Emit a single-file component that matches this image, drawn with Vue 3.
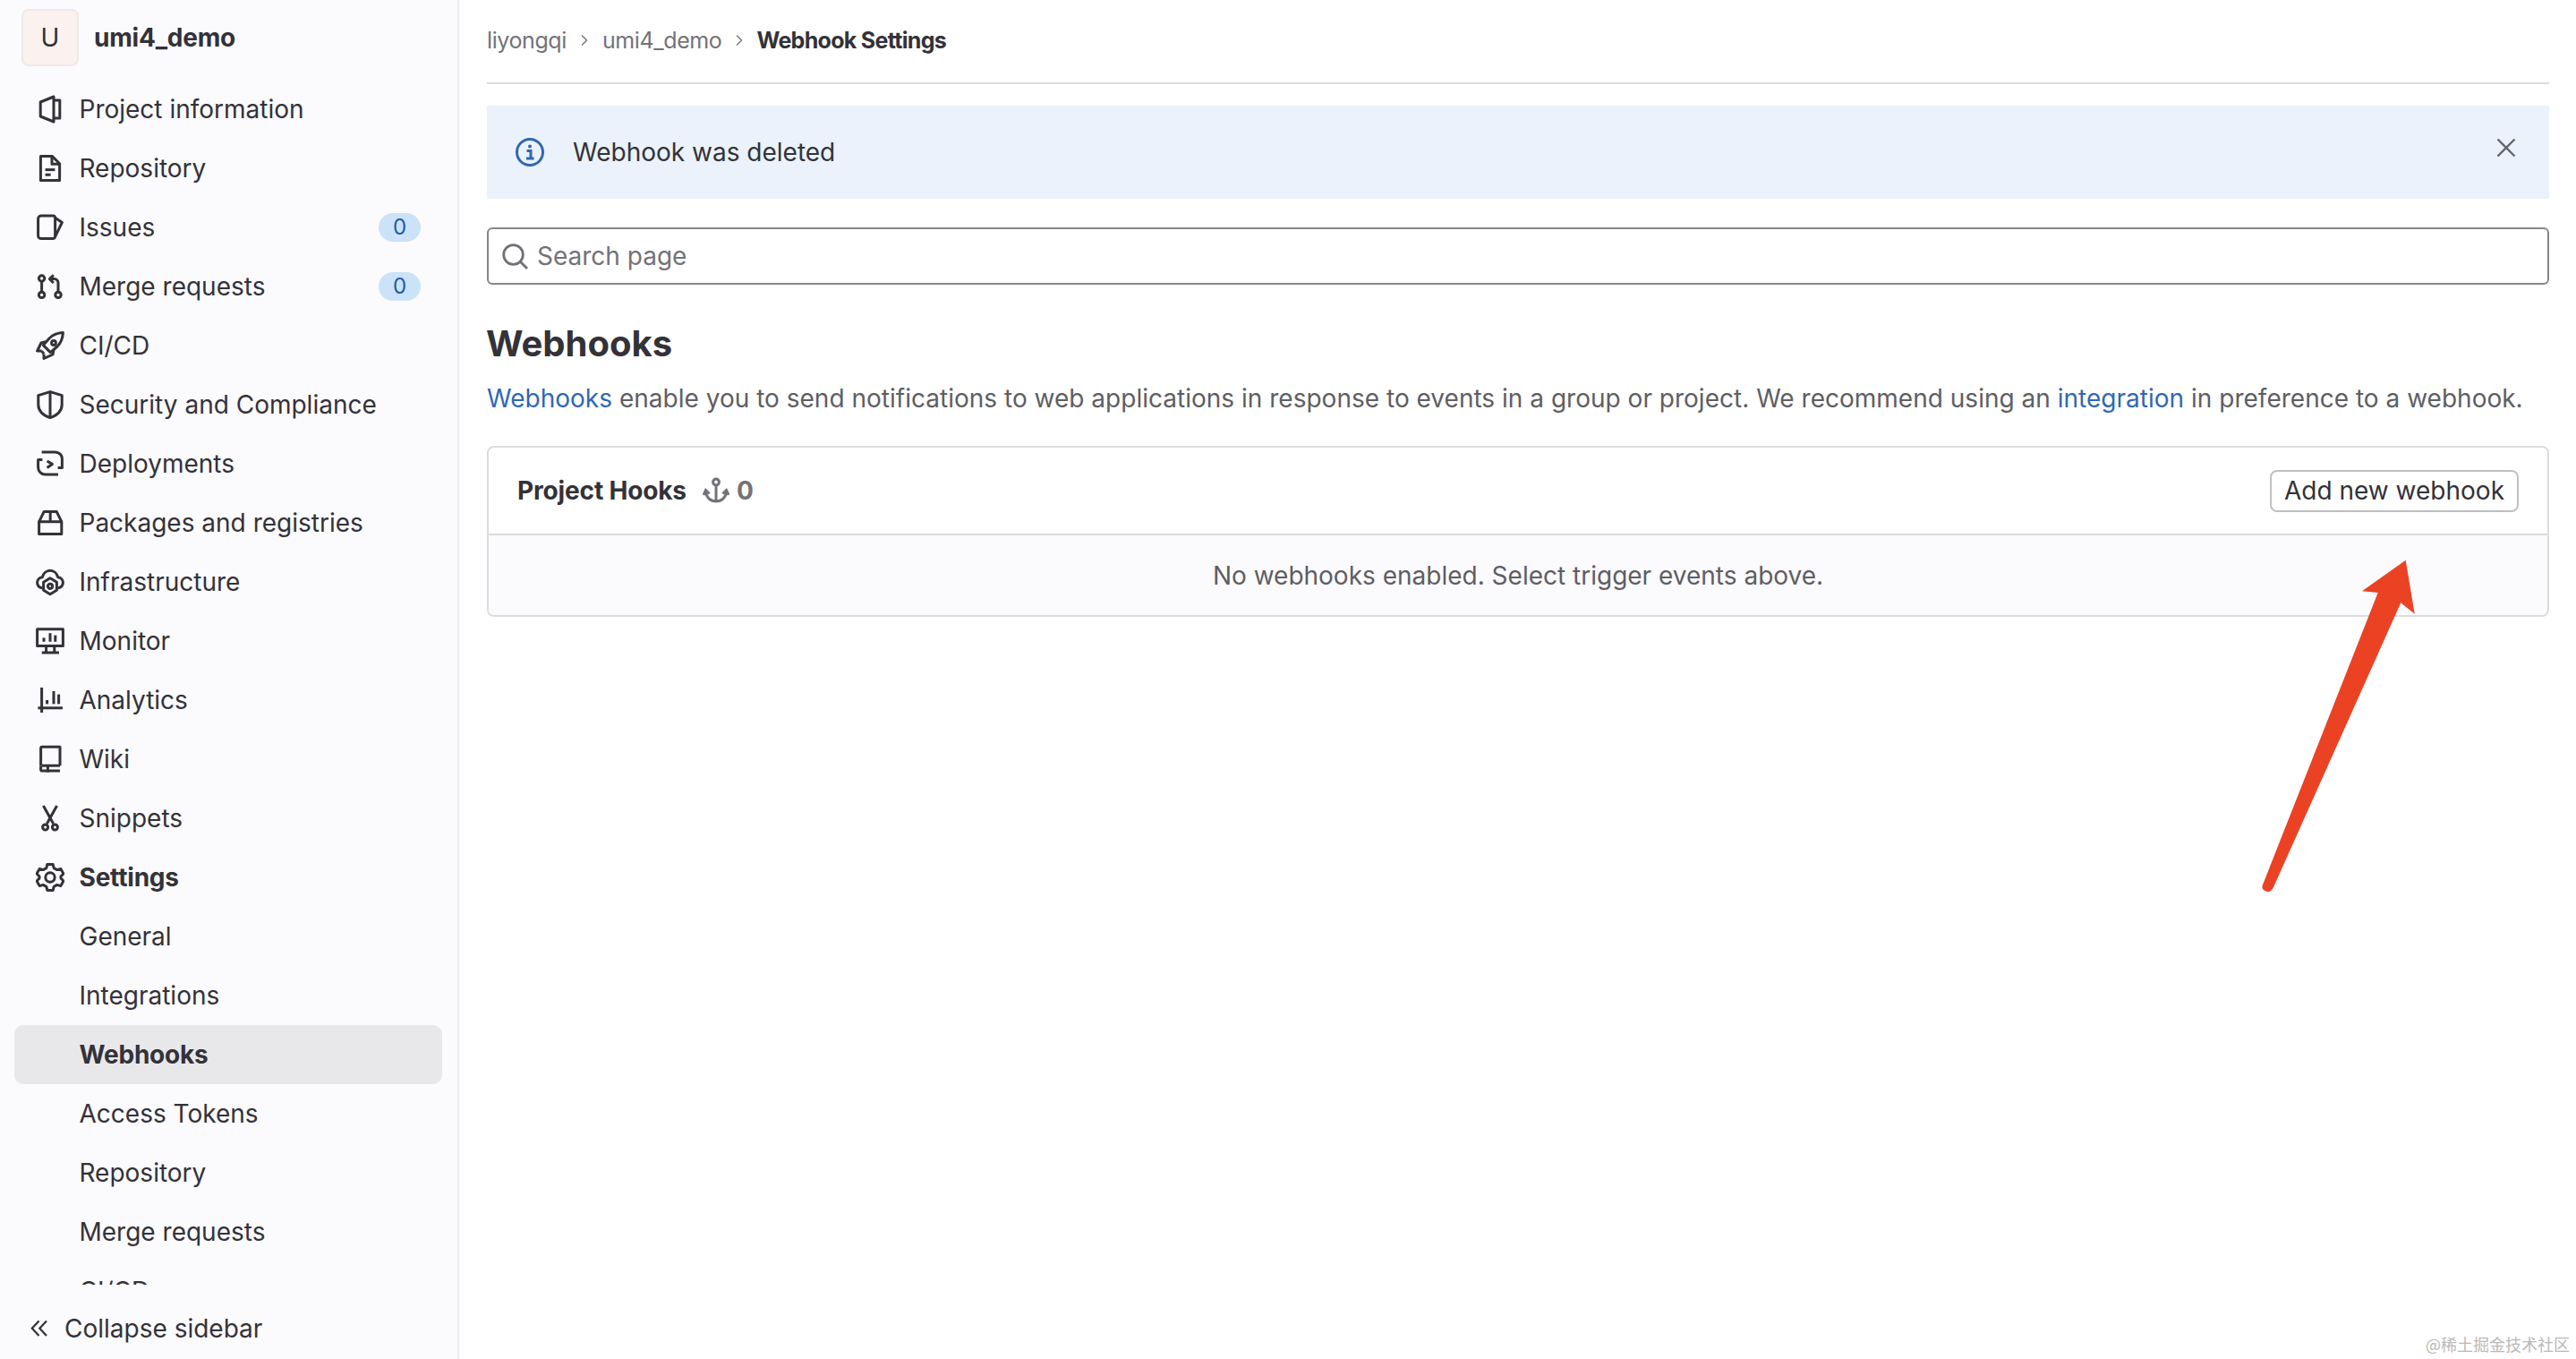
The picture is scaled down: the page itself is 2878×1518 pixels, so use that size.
<script setup>
const items = [
  { label: 'Project information', icon: ['M2.6 4 10 1v14l-7.4-3z', 'M10 3h3.4v10H10'] },
  { label: 'Repository', icon: ['M2.7 1.200h6.400l4.200 4.200v9.400H2.700z', 'M9 1.200v4.400h4.300', 'M5.300 8.800h5.400', 'M5.300 11.600h3'] },
  { label: 'Issues', icon: ['M3 1.500H9.600A1.200 1.200 0 0 1 10.800 2.700V13.100A1.200 1.200 0 0 1 9.600 14.300H3A1.700 1.700 0 0 1 1.300 12.600V3.200A1.700 1.700 0 0 1 3 1.500z', 'M10.800 2.600 14.700 5.200 10.800 13.200'], badge: '0' },
  { label: 'Merge requests', icon: ['M3.300 5.200V11', 'M4.900 3.500a1.600 1.600 0 1 1-3.200 0 1.600 1.600 0 0 1 3.200 0z', 'M4.900 12.700a1.600 1.600 0 1 1-3.200 0 1.600 1.600 0 0 1 3.200 0z', 'M14.100 12.700a1.600 1.600 0 1 1-3.200 0 1.600 1.600 0 0 1 3.200 0z', 'M12.500 11.100V6a2.200 2.200 0 0 0-2.200-2.200H8', 'M9.900 1.600 7.700 3.800l2.200 2.200'], badge: '0' },
  { label: 'CI/CD', icon: ['M15.200.800C12 1 9.500 2 7.500 4L4.200 7.800l4 4L12 8.500C14 6.500 15 4 15.200.800z', 'M5.500 5.800 3 6.500.800 11h2.500', 'M10 10.200 9.500 13 4.500 15.200v-2.500', 'M3.300 11l1.200 1.700', 'M11.200 6.500a1.200 1.200 0 1 1-2.400 0 1.200 1.200 0 0 1 2.400 0z'] },
  { label: 'Security and Compliance', icon: ['M8 .800 14.600 2.800V8c0 3.500-2.900 6-6.600 7.300C4.300 14 1.400 11.500 1.400 8V2.800z', 'M8 .800v14.500'] },
  { label: 'Deployments', icon: ['M3.300 1.500H10.800A3.900 3.700 0 0 1 14.700 5.200V10.200H12.300', 'M12.500 14H5.300A4 4 0 0 1 1.300 10.200V5.700H3.700', 'M6.300 6.500 9.200 8.200 6.300 10.200'] },
  { label: 'Packages and registries', icon: ['M1.800 7.400h12.600v6.800H1.800z', 'M1.800 7.400 4.600 1.700h7l2.800 5.700', 'M8.100 1.700v5.700'] },
  { label: 'Infrastructure', icon: ['M3.500 11.500C1.800 11 .800 9.800.800 8.400c0-1.600 1.200-2.800 2.800-3C4.200 3.200 6 1.600 8 1.600s3.800 1.600 4.400 3.800c1.600.2 2.800 1.400 2.800 3 0 1.400-1 2.600-2.700 3.100', 'M8 5.900l3.700 2.200v4.500L8 14.900l-3.700-2.300V8.100z', 'M9.300 10.400a1.300 1.300 0 1 1-2.600 0 1.300 1.300 0 0 1 2.600 0z'] },
  { label: 'Monitor', icon: ['M.800 1.400h14.400v9.400H.800z', 'M3.400 14.500H13', 'M5.800 10.800v3.700', 'M10.400 10.800v3.700', 'M4.500 6.200v2.200', 'M8 3.600v4.800', 'M10.900 4.800v3.600'] },
  { label: 'Analytics', icon: ['M1.200 12.400h13.800', 'M3.300 1v14', 'M6.300 8v2.200', 'M10 3v7.200', 'M12.800 4.800v5.400'] },
  { label: 'Wiki', icon: ['M2.800 11.800V1.900a.800.800 0 0 1 .800-.800H13.500v10.500', 'M2.800 11.800v1.900a.800.800 0 0 0 .800.800h9.900', 'M3.400 11.600H13.500', 'M6.700 11.600v3.700'] },
  { label: 'Snippets', icon: ['M4.200 1 9.800 11', 'M11.800 1 6.200 11', 'M6.800 13a1.500 1.500 0 1 1-3 0 1.500 1.500 0 0 1 3 0z', 'M12.200 13a1.500 1.500 0 1 1-3 0 1.500 1.500 0 0 1 3 0z'] },
  { label: 'Settings', bold: true, icon: ['M6.400.800H9.600l.5 2 1.800 1 2-.6 1.600 2.800-1.500 1.400v1.200l1.500 1.400-1.600 2.800-2-.6-1.800 1-.5 2H6.400l-.5-2-1.800-1-2 .6L.500 10 2 8.600V7.400L.500 6l1.600-2.800 2 .6 1.800-1z', 'M10.600 8a2.600 2.600 0 1 1-5.200 0 2.600 2.600 0 0 1 5.200 0z'] },
  { label: 'General' },
  { label: 'Integrations' },
  { label: 'Webhooks', active: true },
  { label: 'Access Tokens' },
  { label: 'Repository' },
  { label: 'Merge requests' },
  { label: 'CI/CD' },
]
</script>

<template>
  <div class="page">
    <aside class="sidebar">
      <div class="project">
        <span class="avatar">U</span>
        <span class="project-name">umi4_demo</span>
      </div>
      <nav class="nav">
        <a v-for="item in items" :key="item.label + (item.icon ? 'i' : 's')" class="nav-item" :class="{ active: item.active, bold: item.bold || item.active }">
          <span class="nav-icon">
            <svg v-if="item.icon" width="32" height="32" viewBox="0 0 16 16" fill="none" stroke="#333238" stroke-width="1.500" stroke-linejoin="round">
              <path v-for="d in item.icon" :key="d" :d="d" />
            </svg>
          </span>
          <span class="nav-label">{{ item.label }}</span>
          <span v-if="item.badge" class="badge">{{ item.badge }}</span>
        </a>
      </nav>
      <div class="collapse">
        <svg width="20" height="20" viewBox="0 0 20 20" fill="none" stroke="#333238" stroke-width="2.200">
          <path d="M9.500 1.500 1.800 9.800l7.700 8.300" />
          <path d="M18 1.500 10.300 9.800l7.700 8.300" />
        </svg>
        <span>Collapse sidebar</span>
      </div>
    </aside>

    <main class="main">
      <div class="crumbs">
        <span>liyongqi</span>
        <svg class="chev" width="10" height="14" viewBox="0 0 10 14" fill="none" stroke="#737278" stroke-width="1.400"><path d="m2 1.500 5.500 5.500L2 12.500" /></svg>
        <span>umi4_demo</span>
        <svg class="chev" width="10" height="14" viewBox="0 0 10 14" fill="none" stroke="#737278" stroke-width="1.400"><path d="m2 1.500 5.500 5.500L2 12.500" /></svg>
        <strong>Webhook Settings</strong>
      </div>

      <div class="alert">
        <svg width="32" height="32" viewBox="0 0 32 32" fill="none">
          <circle cx="16" cy="16" r="14.500" stroke="#2f68b4" stroke-width="3" />
          <circle cx="16" cy="9.500" r="2" fill="#2f68b4" />
          <path d="M12.500 14.500h4.500v8M12 23h8.500" stroke="#2f68b4" stroke-width="3" />
        </svg>
        <span class="alert-text">Webhook was deleted</span>
        <svg class="alert-close" width="22" height="22" viewBox="0 0 22 22" fill="none" stroke="#63666e" stroke-width="2.400"><path d="m1.500 1.500 19 19M20.500 1.500l-19 19" /></svg>
      </div>

      <div class="search">
        <svg width="29" height="29" viewBox="0 0 29 29" fill="none" stroke="#6f6f75" stroke-width="2.800">
          <circle cx="12.500" cy="12.500" r="10.800" />
          <path d="m20.500 20.500 7.500 7.500" />
        </svg>
        <span>Search page</span>
      </div>

      <h1 class="title">Webhooks</h1>
      <p class="desc"><a>Webhooks</a> enable you to send notifications to web applications in response to events in a group or project. We recommend using an <a>integration</a> in preference to a webhook.</p>

      <section class="card">
        <header class="card-head">
          <strong>Project Hooks</strong>
          <svg class="anchor" width="30" height="30" viewBox="0 0 30 30" fill="none" stroke="#737278" stroke-width="3">
            <circle cx="15" cy="5.500" r="3.400" />
            <path d="M15 9v17.500" />
            <path d="M3.500 16C4 23 9 27 15 27s11-4 11.500-11" />
            <path d="M1 20 3.500 14.500 7.500 18.500" />
            <path d="M22.500 18.500 26.500 14.500 29 20" />
          </svg>
          <span class="count">0</span>
          <button class="add">Add new webhook</button>
        </header>
        <div class="empty">No webhooks enabled. Select trigger events above.</div>
      </section>
    </main>

    <svg class="arrow" width="2878" height="1518" viewBox="0 0 2878 1518">
      <path d="M2687.700 625.700 2639 660.300 2656.700 662 2528.500 987Q2525 994 2533 996 2537 997 2540 991L2682.300 673.300 2697.700 685.700z" fill="#ec4224" />
    </svg>
    <span class="mark">@稀土掘金技术社区</span>
  </div>
</template>

<style>
html, body { margin: 0; overflow: hidden; background: #fff; }
</style>

<style scoped>
.page {
  position: relative;
  display: flex;
  width: 2878px;
  height: 1518px;
  overflow: hidden;
  font-family: Inter, "Noto Sans", sans-serif;
  color: #333238;
  background: #fff;
}
.sidebar {
  box-sizing: border-box;
  width: 513px;
  height: 1518px;
  flex: none;
  display: flex;
  flex-direction: column;
  background: #fbfafd;
  border-right: 2px solid #ececef;
}
.project {
  height: 84px;
  flex: none;
  box-sizing: border-box;
  padding: 10px 0 0 24px;
  display: flex;
  align-items: flex-start;
  gap: 17px;
}
.avatar {
  box-sizing: border-box;
  width: 64px;
  height: 64px;
  display: flex;
  align-items: center;
  justify-content: center;
  font-size: 28px;
  border-radius: 8px;
  background: #fbf1ee;
  border: 2px solid #efe9e8;
}
.project-name {
  line-height: 64px;
  font-size: 28px;
  font-weight: 700;
  letter-spacing: -0.2px;
}
.nav {
  height: 1351px;
  flex: none;
  padding: 5px 0 0;
  box-sizing: border-box;
  overflow: hidden;
}
.nav-item {
  height: 66px;
  margin: 0 17px 0 16px;
  padding: 0 24px;
  display: flex;
  align-items: center;
  border-radius: 10px;
  font-size: 28px;
}
.nav-item.bold { font-weight: 700; letter-spacing: -0.2px; }
.nav-item.active { background: #e8e8ea; }
.nav-icon {
  width: 48.500px;
  flex: none;
  display: flex;
  height: 32px;
}
.nav-label { flex: 1; }
.badge {
  width: 47px;
  height: 32px;
  border-radius: 16px;
  background: #cbe2f9;
  color: #1f5ca8;
  font-size: 24px;
  line-height: 32px;
  text-align: center;
}
.collapse {
  flex: 1;
  display: flex;
  align-items: center;
  padding: 14px 0 0 34px;
  gap: 18px;
  font-size: 28px;
}
.main {
  flex: 1;
  min-width: 0;
  padding: 0 30px 0 31px;
}
.crumbs {
  height: 90px;
  padding-bottom: 2px;
  display: flex;
  align-items: center;
  border-bottom: 2px solid #dcdcde;
  color: #737278;
  font-size: 25px;
  letter-spacing: -0.4px;
}
.crumbs strong { color: #333238; font-weight: 700; letter-spacing: -0.7px; margin-left: -1px; }
.chev { margin: 0 15px 0 15px; }
.alert {
  margin-top: 24px;
  height: 104px;
  display: flex;
  align-items: center;
  padding-left: 32px;
  background: #ebf2fb;
  font-size: 28px;
}
.alert-text { margin-left: 32px; flex: 1; }
.alert-close { margin: 0 37px 10px 0; }
.search {
  box-sizing: border-box;
  margin-top: 32px;
  height: 64px;
  display: flex;
  align-items: center;
  gap: 10px;
  padding-left: 15px;
  border: 2px solid #868686;
  border-radius: 6px;
  color: #737278;
  font-size: 28px;
}
.title {
  margin: 40px 0 0 -1px;
  font-size: 40px;
  line-height: 52px;
  font-weight: 700;
}
.desc {
  margin: 13px 0 0;
  line-height: 44px;
  font-size: 28px;
  color: #5e5e63;
  white-space: nowrap;
  letter-spacing: 0.012px;
}
.desc a { color: #2f68b4; }
.card {
  margin-top: 31px;
  box-sizing: border-box;
  height: 191px;
  border: 2px solid #dcdcde;
  border-radius: 8px;
  overflow: hidden;
}
.card-head {
  height: 96px;
  display: flex;
  align-items: center;
  padding: 0 32px 0 32px;
  border-bottom: 2px solid #dcdcde;
  font-size: 28px;
}
.card-head strong { font-weight: 700; letter-spacing: -0.15px; }
.anchor { margin-left: 18px; }
.count { margin-left: 8px; color: #737278; font-weight: 700; }
.add {
  margin-left: auto;
  box-sizing: border-box;
  width: 278px;
  height: 47px;
  padding: 0;
  background: #fff;
  border: 2px solid #bfbfc3;
  border-radius: 8px;
  font-family: inherit;
  font-size: 28px;
  color: #333238;
}
.empty {
  height: 89px;
  padding-bottom: 2px;
  display: flex;
  align-items: center;
  justify-content: center;
  background: #fbfafd;
  color: #5e5e63;
  font-size: 28px;
}
.arrow {
  position: absolute;
  left: 0;
  top: 0;
  pointer-events: none;
}
.mark {
  position: absolute;
  right: 7px;
  bottom: 5px;
  font-family: "Noto Sans CJK SC", sans-serif;
  font-size: 18px;
  line-height: 24px;
  color: #b9b9b9;
}
</style>
